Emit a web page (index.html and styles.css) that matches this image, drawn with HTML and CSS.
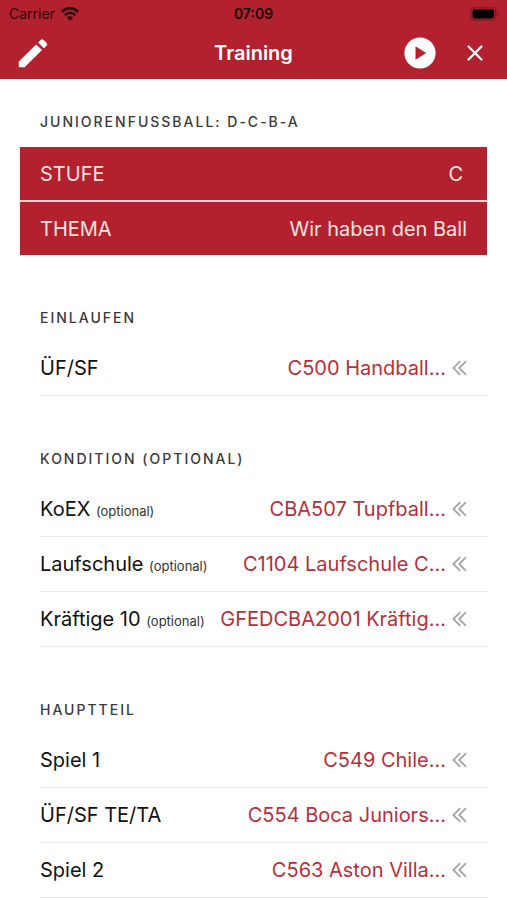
FILE: index.html
```html
<!DOCTYPE html>
<html lang="de">
<head>
<meta charset="utf-8">
<meta name="viewport" content="width=device-width, initial-scale=1">
<title>Training</title>
<link rel="stylesheet" href="styles.css">
</head>
<body>
<svg class="sprite" aria-hidden="true">
  <symbol id="chevrons" viewBox="0 0 16 16"><path d="M9.200 1.200 2.400 8l6.800 6.800M15 1.200 8.200 8l6.800 6.800" fill="none" stroke="currentColor" stroke-width="1.800"/></symbol>
</svg>
<header class="top">
  <div class="status">
    <div class="carrier">
      <span>Carrier</span>
      <svg width="18" height="14" viewBox="0 0 18 14" aria-hidden="true">
        <path d="M.8 4.600Q9-2.200 17.200 4.600" fill="none" stroke="currentColor" stroke-width="2.700"/>
        <path d="M3.700 8Q9 3.500 14.300 8" fill="none" stroke="currentColor" stroke-width="2.600"/>
        <path d="M9 13.700 5.900 10.500Q9 7.800 12.100 10.500Z" fill="currentColor"/>
      </svg>
    </div>
    <span class="clock">07:09</span>
    <svg class="battery" width="30" height="14" viewBox="0 0 30 14" aria-hidden="true">
      <rect x=".8" y=".8" width="25" height="12.400" rx="3.500" fill="none" stroke="#7d1822" stroke-width="1.200"/>
      <rect x="2.500" y="2.500" width="21.600" height="9" rx="2" fill="#000"/>
      <path d="M27.500 5v4q1.500-.6 1.500-2t-1.500-2" fill="#7d1822"/>
    </svg>
  </div>
  <div class="bar">
    <button class="tool edit" type="button" aria-label="Bearbeiten">
      <svg width="30" height="30" viewBox="0 0 30 30"><path fill="#fff" d="M.8 23.400 18.200 6.400 24 12 6.600 29.200H.8ZM20.200 4.600l2.800-2.800q1.200-1.200 2.400 0l3.300 3.300q1.200 1.200 0 2.400l-2.900 2.700Z"/></svg>
    </button>
    <h1>Training</h1>
    <div class="actions">
      <button class="tool" type="button" aria-label="Abspielen">
        <svg width="32" height="32" viewBox="0 0 32 32"><circle cx="16" cy="16" r="15.600" fill="#fff"/><path d="M11.500 9.300v13.400L22.200 16Z" fill="#b2212d"/></svg>
      </button>
      <button class="tool" type="button" aria-label="Schliessen">
        <svg width="16" height="16" viewBox="0 0 16 16"><path d="m1.500 1.500 13 13m0-13-13 13" stroke="#fff" stroke-width="2.200" stroke-linecap="round"/></svg>
      </button>
    </div>
  </div>
</header>
<main>
  <section>
    <h2 class="first">JUNIORENFUSSBALL: D-C-B-A</h2>
    <ul class="summary">
      <li><span>STUFE</span><span class="level">C</span></li>
      <li><span>THEMA</span><span>Wir haben den Ball</span></li>
    </ul>
  </section>
  <section>
    <h2>EINLAUFEN</h2>
    <ul class="list">
      <li><span>ÜF/SF</span><a href="#c500">C500 Handball...<svg><use href="#chevrons"/></svg></a></li>
    </ul>
  </section>
  <section>
    <h2>KONDITION (OPTIONAL)</h2>
    <ul class="list">
      <li><span>KoEX <small>(optional)</small></span><a href="#cba507">CBA507 Tupfball...<svg><use href="#chevrons"/></svg></a></li>
      <li><span>Laufschule <small>(optional)</small></span><a href="#c1104">C1104 Laufschule C...<svg><use href="#chevrons"/></svg></a></li>
      <li><span>Kräftige 10 <small>(optional)</small></span><a href="#gfedcba2001">GFEDCBA2001 Kräftig...<svg><use href="#chevrons"/></svg></a></li>
    </ul>
  </section>
  <section>
    <h2>HAUPTTEIL</h2>
    <ul class="list">
      <li><span>Spiel 1</span><a href="#c549">C549 Chile...<svg><use href="#chevrons"/></svg></a></li>
      <li><span>ÜF/SF TE/TA</span><a href="#c554">C554 Boca Juniors...<svg><use href="#chevrons"/></svg></a></li>
      <li><span>Spiel 2</span><a href="#c563">C563 Aston Villa...<svg><use href="#chevrons"/></svg></a></li>
    </ul>
  </section>
</main>
</body>
</html>
```
FILE: styles.css
```css
* { box-sizing: border-box; }
body {
  margin: 0;
  background: #fff;
  color: #111;
  font-family: Inter, "Liberation Sans", sans-serif;
  font-size: 20px;
  line-height: 24px;
}
.sprite { position: absolute; width: 0; height: 0; }
.top { background: #b2212d; }
.status {
  display: grid;
  grid-template-columns: 1fr auto 1fr;
  align-items: center;
  height: 27px;
  padding: 0 7px;
  color: #2a080b;
  font-size: 14px;
}
.carrier { display: flex; align-items: center; gap: 6px; padding-left: 2px; }
.clock { color: #1a0507; font-weight: 600; }
.battery { justify-self: end; }
.bar {
  display: grid;
  grid-template-columns: 1fr auto 1fr;
  align-items: center;
  height: 52px;
  padding: 0 18px;
}
h1 {
  margin: 0;
  color: #fff;
  font-size: 20px;
  font-weight: 600;
}
.tool {
  display: flex;
  padding: 0;
  border: 0;
  background: none;
}
.edit { justify-self: start; }
.actions {
  display: flex;
  justify-content: flex-end;
  align-items: center;
  gap: 31px;
  padding-right: 6px;
}
main { padding: 0 20px; }
h2 {
  margin: 0;
  padding: 53px 20px 13px;
  color: #3a3a3a;
  font-size: 14px;
  font-weight: 500;
  line-height: 20px;
  letter-spacing: 2px;
}
h2.first { padding: 33px 20px 15px; }
ul { margin: 0; padding: 0; list-style: none; }
li {
  display: flex;
  justify-content: space-between;
  align-items: center;
  min-height: 55px;
  padding-right: 20px;
  white-space: nowrap;
}
.summary {
  display: grid;
  gap: 2px;
  background: #f3d5d7;
}
.summary li {
  min-height: 53px;
  padding: 0 20px;
  background: #b2212d;
  color: #fbe3e0;
}
.summary .level { padding-right: 4px; }
.list { padding-left: 20px; }
.list li { border-bottom: 1px solid #e9e9e9; }
small { color: #333; font-size: 13px; line-height: 1; }
a {
  display: flex;
  align-items: center;
  gap: 5px;
  color: #b5303b;
  text-decoration: none;
}
a svg { width: 16px; height: 16px; color: #a5a5a5; }
```
